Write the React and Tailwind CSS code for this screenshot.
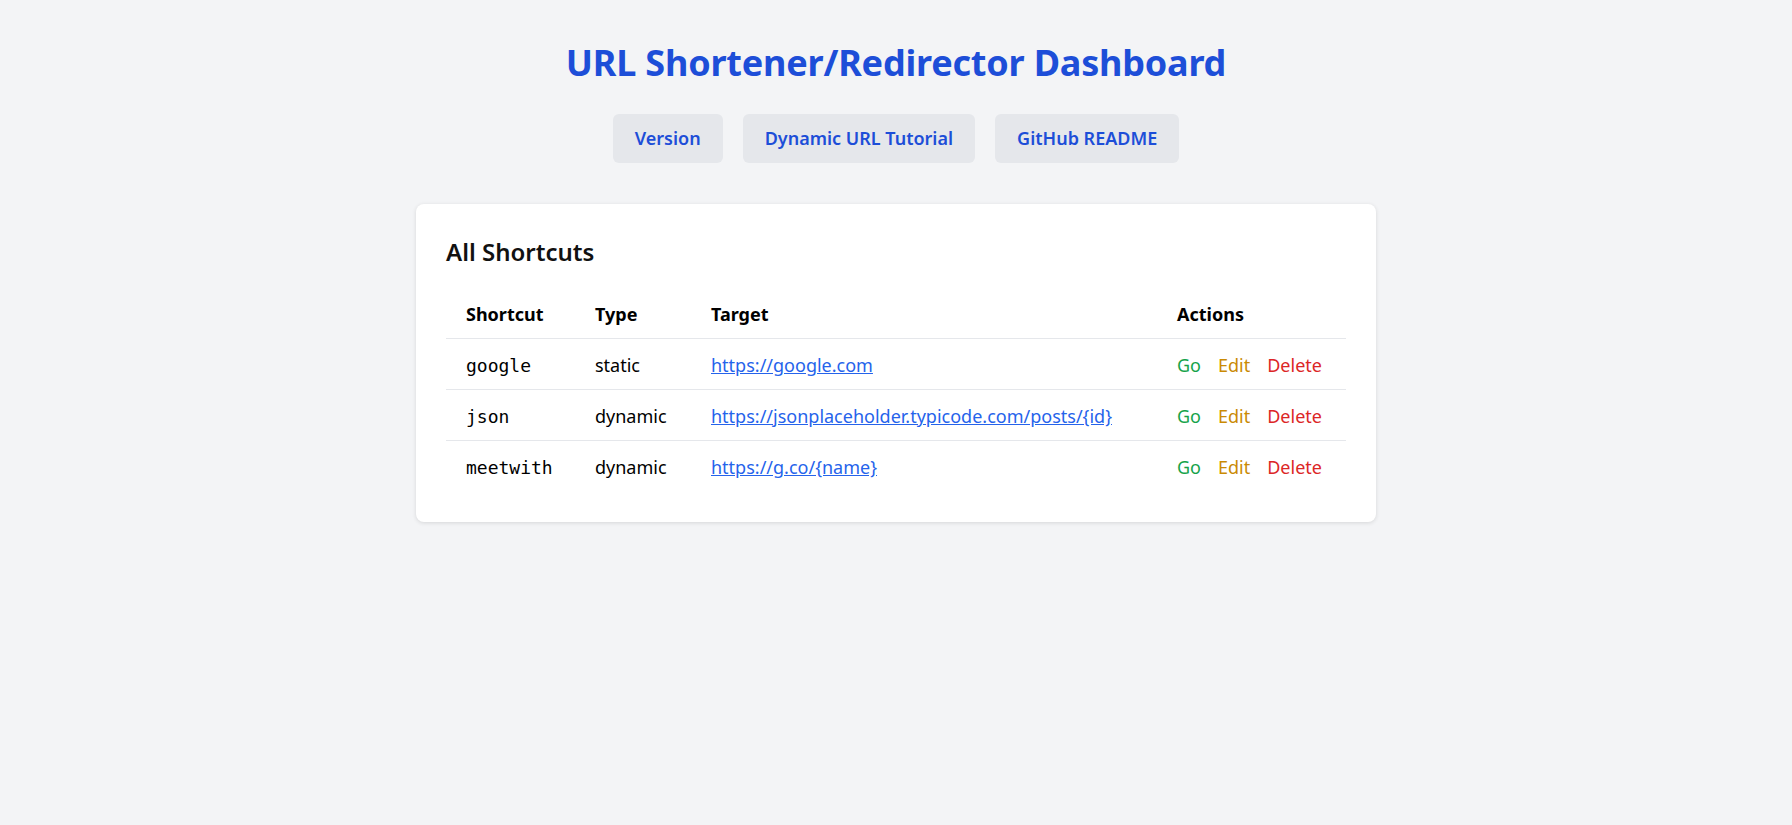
import React from "react";

const rows = [
  { name: "google", type: "static", target: "https://google.com" },
  { name: "json", type: "dynamic", target: "https://jsonplaceholder.typicode.com/posts/{id}" },
  { name: "meetwith", type: "dynamic", target: "https://g.co/{name}" },
];

export default function App() {
  return (
    <div
      className="min-h-screen bg-[#f3f4f6] flex flex-col items-center pt-[39px]"
      style={{ fontFamily: '"Noto Sans", "Open Sans", sans-serif' }}
    >
      <h1 className="text-[36px] leading-[48px] font-bold tracking-[-0.2px] text-[#1d4ed8]">
        URL Shortener/Redirector Dashboard
      </h1>
      <div className="mt-[27px] flex gap-[20px]">
        {["Version", "Dynamic URL Tutorial", "GitHub README"].map((b) => (
          <button
            key={b}
            className="h-[49px] px-[22px] rounded-md bg-[#e5e7eb] text-[#1d4ed8] text-[18px] font-semibold"
          >
            {b}
          </button>
        ))}
      </div>
      <div className="mt-[41px] w-[960px] bg-white rounded-lg shadow-[0_1px_4px_rgba(0,0,0,0.12)] px-[30px] pt-[32px] pb-[31px]">
        <h2 className="text-[24px] leading-[32px] font-semibold text-[#111] mb-[20px]">All Shortcuts</h2>
        <table className="w-full table-fixed text-[18px] leading-[27px] text-black">
          <colgroup>
            <col className="w-[129px]" />
            <col className="w-[116px]" />
            <col />
            <col className="w-[189px]" />
          </colgroup>
          <thead>
            <tr className="border-b border-[#e5e7eb]">
              <th className="text-left font-bold px-5 pt-[13px] pb-[10px]">Shortcut</th>
              <th className="text-left font-bold px-5 pt-[13px] pb-[10px]">Type</th>
              <th className="text-left font-bold px-5 pt-[13px] pb-[10px]">Target</th>
              <th className="text-left font-bold px-5 pt-[13px] pb-[10px]">Actions</th>
            </tr>
          </thead>
          <tbody>
            {rows.map((r, i) => (
              <tr key={r.name} className={i > 0 ? "border-t border-[#e5e7eb]" : ""}>
                <td className="px-5 pt-[13px] pb-[10px]">
                  <code style={{ fontFamily: '"DejaVu Sans Mono", monospace' }} className="text-[18px]">
                    {r.name}
                  </code>
                </td>
                <td className="px-5 pt-[13px] pb-[10px]">{r.type}</td>
                <td className="px-5 pt-[13px] pb-[10px] whitespace-nowrap">
                  <a href="#" className="text-[#2563eb] underline">
                    {r.target}
                  </a>
                </td>
                <td className="px-5 pt-[13px] pb-[10px] whitespace-nowrap">
                  <span className="flex gap-[17px]">
                    <a href="#" className="text-[#16a34a]">Go</a>
                    <a href="#" className="text-[#ca8a04]">Edit</a>
                    <a href="#" className="text-[#dc2626]">Delete</a>
                  </span>
                </td>
              </tr>
            ))}
          </tbody>
        </table>
      </div>
    </div>
  );
}
